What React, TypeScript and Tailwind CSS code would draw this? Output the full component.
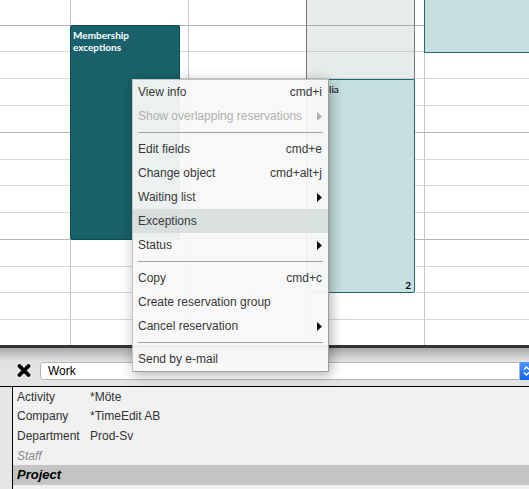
import React from "react";

type MenuItem = {
  label?: string;
  shortcut?: string;
  submenu?: boolean;
  disabled?: boolean;
  active?: boolean;
  sep?: boolean;
};

const menuItems: MenuItem[] = [
  { label: "View info", shortcut: "cmd+i" },
  { label: "Show overlapping reservations", submenu: true, disabled: true },
  { sep: true },
  { label: "Edit fields", shortcut: "cmd+e" },
  { label: "Change object", shortcut: "cmd+alt+j" },
  { label: "Waiting list", submenu: true },
  { label: "Exceptions", active: true },
  { label: "Status", submenu: true },
  { sep: true },
  { label: "Copy", shortcut: "cmd+c" },
  { label: "Create reservation group" },
  { label: "Cancel reservation", submenu: true },
  { sep: true },
  { label: "Send by e-mail" },
];

const ROWS = 13;
const COLS = 5;
const hourRows = [0, 4, 8];

const fields = [
  { label: "Activity", value: "*Möte", h: "h-[19px]" },
  { label: "Company", value: "*TimeEdit AB", h: "h-[20px]" },
  { label: "Department", value: "Prod-Sv", h: "h-[20px]" },
];

const Arrow = ({ gray }: { gray?: boolean }) => (
  <svg width="5" height="9" viewBox="0 0 5 9">
    <path d="M0 0 L5 4.5 L0 9 Z" fill={gray ? "#b0b0b0" : "#111"} />
  </svg>
);

const ContextMenu = () => (
  <div className="absolute left-[132px] top-[79px] w-[197px] bg-[#f8f8f8]/[0.95] border border-[#c2c2c2] border-r-[#9c9c9c] border-b-[#9c9c9c] shadow-[2px_3px_12px_rgba(0,0,0,0.32)] text-[12px] text-[#383838]">
    {menuItems.map((item, i) =>
      item.sep ? (
        <div key={i} className="h-[9px] flex items-center px-[5px]">
          <div className="h-px w-full bg-[#a3a3a3]" />
        </div>
      ) : (
        <div
          key={i}
          className={`h-[24px] flex items-center justify-between pl-[5px] pr-[6px] ${
            item.active ? "bg-[#d6dddd]/90" : ""
          } ${item.disabled ? "text-[#b0b0b0]" : ""}`}
        >
          <span>{item.label}</span>
          {item.shortcut && <span>{item.shortcut}</span>}
          {item.submenu && <Arrow gray={item.disabled} />}
        </div>
      )
    )}
  </div>
);

export default function App() {
  return (
    <div className="w-[529px] h-[489px] overflow-hidden bg-white font-['Liberation_Sans',Arial,sans-serif] flex flex-col">
      {/* calendar */}
      <div className="relative h-[345px] shrink-0">
        <div className="grid grid-cols-[71px_118px_118px_118px_1fr] grid-rows-[26px_26px_27px_27px_27px_27px_26px_27px_27px_27px_26px_27px_25px] h-full">
          {Array.from({ length: ROWS * COLS }).map((_, idx) => {
            const r = Math.floor(idx / COLS);
            const c = idx % COLS;
            const hour = hourRows.includes(r);
            return (
              <div
                key={idx}
                className={`${c < COLS - 1 ? "border-r border-r-[#c6c6c6]" : ""} ${
                  r < ROWS - 1
                    ? hour
                      ? "border-b border-b-[#b4b4b4]"
                      : "border-b border-b-[#d8d8d8]"
                    : ""
                }`}
              />
            );
          })}
        </div>

        {/* reservations */}
        <div className="absolute left-[306px] top-0 w-[109px] h-[80px] bg-[#8a9a9a]/20 border-x border-[#7a7a7a]" />
        <div className="absolute left-[424px] -top-[2px] w-[110px] h-[55px] bg-[#c7dfe0] border-l border-b border-[#1d6a72]" />
        <div className="absolute left-[70px] top-[25px] w-[110px] h-[215px] bg-[#19616a] border border-[#0f4b53] rounded-[2px] px-[2px] pt-[3px] font-['Lato',sans-serif] font-bold text-[10px] leading-[12px] text-white">
          Membership
          <br />
          exceptions
        </div>
        <div className="absolute left-[306px] top-[79px] w-[109px] h-[214px] bg-[#c7dfe0] border border-[#1d6a72] rounded-[2px] flex flex-col justify-between px-[3px] pt-[3px] pb-[1px] font-['Lato',sans-serif] text-[10px] leading-[12px] text-black">
          <span>Cecilia</span>
          <span className="self-end font-bold">2</span>
        </div>

        <ContextMenu />
      </div>

      {/* divider bar */}
      <div className="h-[3px] shrink-0 bg-[#333]" />

      {/* toolbar */}
      <div className="h-[38px] shrink-0 bg-[linear-gradient(to_bottom,#a9a9a9,#e2e2e2_13px,#e4e4e4)] flex items-start pt-[14px] pl-[17px]">
        <svg width="14" height="13" viewBox="0 0 14 13" className="mt-[2px]">
          <path d="M2.5 2 L11.5 11 M11.5 2 L2.5 11" stroke="#000" strokeWidth="3.8" strokeLinecap="round" />
        </svg>
        <div className="ml-[9px] flex-1 h-[18px] bg-white border border-[#b5b5b5] rounded-l-[4px] flex items-center pl-[7px] text-[12px] text-black">
          Work
        </div>
        <div className="w-[9px] h-[18px] bg-[linear-gradient(to_bottom,#4a97ff,#1463ea)] flex items-center pl-[3px]">
          <svg width="6" height="12" viewBox="0 0 6 12">
            <path d="M1 4.5 L3.5 2 L6 4.5 M1 7.5 L3.5 10 L6 7.5" stroke="#fff" strokeWidth="1.4" fill="none" />
          </svg>
        </div>
      </div>

      <div className="h-px shrink-0 bg-black" />

      {/* object table */}
      <div className="flex-1 flex">
        <div className="w-[12px] bg-[#e6e6e6]" />
        <div className="flex-1 border-l border-black bg-[#f1f1f1] text-[12px] text-[#333]">
          {fields.map((f) => (
            <div key={f.label} className={`${f.h} flex items-center pl-[4px]`}>
              <span className="w-[73px]">{f.label}</span>
              <span>{f.value}</span>
            </div>
          ))}
          <div className="h-[19px] flex items-center pl-[4px] italic text-[#8a8a8a]">Staff</div>
          <div className="h-[20px] flex items-center pl-[4px] bg-[#c4c4c4] italic font-bold text-[13px] text-black">
            Project
          </div>
        </div>
      </div>
    </div>
  );
}
